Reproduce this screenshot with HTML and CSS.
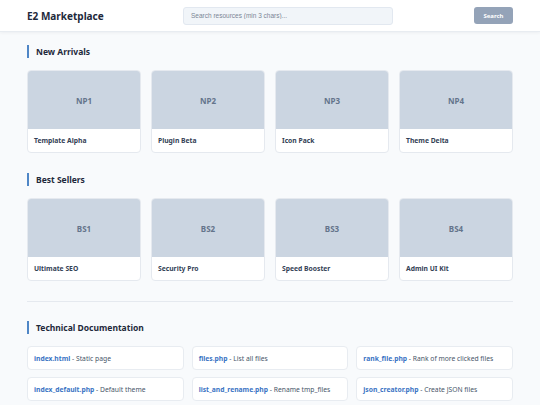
FILE: index.html
```html
<!DOCTYPE html>
<html lang="en">
<head>
<meta charset="utf-8">
<title>E2 Marketplace</title>
<link rel="stylesheet" href="styles.css">
</head>
<body>
<header class="topbar">
  <div class="brand">E2 Marketplace</div>
  <input class="search" type="text" placeholder="Search resources (min 3 chars)...">
  <button class="search-btn">Search</button>
</header>
<main class="content">
  <section class="section">
    <h2 class="section-title">New Arrivals</h2>
    <div class="cards">
      <div class="card"><div class="thumb">NP1</div><div class="card-body">Template Alpha</div></div>
      <div class="card"><div class="thumb">NP2</div><div class="card-body">Plugin Beta</div></div>
      <div class="card"><div class="thumb">NP3</div><div class="card-body">Icon Pack</div></div>
      <div class="card"><div class="thumb">NP4</div><div class="card-body">Theme Delta</div></div>
    </div>
  </section>
  <section class="section">
    <h2 class="section-title">Best Sellers</h2>
    <div class="cards">
      <div class="card"><div class="thumb">BS1</div><div class="card-body">Ultimate SEO</div></div>
      <div class="card"><div class="thumb">BS2</div><div class="card-body">Security Pro</div></div>
      <div class="card"><div class="thumb">BS3</div><div class="card-body">Speed Booster</div></div>
      <div class="card"><div class="thumb">BS4</div><div class="card-body">Admin UI Kit</div></div>
    </div>
  </section>
  <hr class="divider">
  <section class="section">
    <h2 class="section-title">Technical Documentation</h2>
    <div class="docs">
      <div class="doc"><a class="doc-link">index.html</a> - Static page</div>
      <div class="doc"><a class="doc-link">files.php</a> - List all files</div>
      <div class="doc"><a class="doc-link">rank_file.php</a> - Rank of more clicked files</div>
      <div class="doc"><a class="doc-link">index_default.php</a> - Default theme</div>
      <div class="doc"><a class="doc-link">list_and_rename.php</a> - Rename tmp_files</div>
      <div class="doc"><a class="doc-link">json_creator.php</a> - Create JSON files</div>
    </div>
  </section>
</main>
</body>
</html>
```

FILE: styles.css
```css
* { box-sizing: border-box; }
html, body { margin: 0; padding: 0; }
body {
  background: #f8fafc;
  font-family: "Noto Sans", "Open Sans", sans-serif;
  color: #1e293b;
  overflow: hidden;
}
.topbar {
  height: 32px;
  background: #ffffff;
  border-bottom: 1px solid #e8ecf1;
  box-shadow: 0 1px 3px rgba(15, 23, 42, 0.05);
  display: flex;
  align-items: center;
  padding: 0 27px;
}
.brand {
  font-weight: 700;
  font-size: 10px;
  color: #1e293b;
  width: 156px;
}
.search {
  width: 210px;
  height: 18px;
  border: 1px solid #e2e8f0;
  background: #f1f5f9;
  border-radius: 3px;
  padding: 0 7px;
  font-family: "Liberation Sans", sans-serif;
  font-size: 6.5px;
  color: #334155;
  outline: none;
}
.search::placeholder { color: #7b8595; }
.search-btn {
  margin-left: auto;
  width: 39px;
  height: 17px;
  background: #94a3b8;
  border: none;
  border-radius: 3px;
  color: #ffffff;
  font-family: "Noto Sans", sans-serif;
  font-size: 6px;
  font-weight: 700;
  padding: 0;
}
.content {
  padding: 13px 27px 0;
}
.section { margin-bottom: 20px; }
.section-title {
  margin: 0 0 12px;
  border-left: 2px solid #4f86c6;
  padding-left: 7px;
  height: 13px;
  line-height: 13px;
  font-size: 8.5px;
  font-weight: 700;
  color: #1e293b;
}
.cards {
  display: grid;
  grid-template-columns: repeat(4, 1fr);
  gap: 10px;
}
.card {
  background: #ffffff;
  border: 1px solid #e5e9ef;
  border-radius: 4px;
  overflow: hidden;
}
.thumb {
  height: 58px;
  background: #cbd5e1;
  display: flex;
  align-items: center;
  justify-content: center;
  font-size: 8px;
  font-weight: 700;
  color: #64748b;
}
.card-body {
  height: 23px;
  display: flex;
  align-items: center;
  padding: 0 6px;
  font-size: 6.75px;
  font-weight: 700;
  color: #334155;
}
.divider {
  border: none;
  border-top: 1px solid #e5e9ef;
  margin: 0 0 19px;
}
.docs {
  display: grid;
  grid-template-columns: repeat(3, 1fr);
  gap: 7px 8px;
}
.doc {
  height: 24px;
  background: #ffffff;
  border: 1px solid #e8ecf1;
  border-radius: 4px;
  display: flex;
  align-items: center;
  padding: 0 6px;
  font-size: 6.75px;
  color: #475569;
  white-space: pre;
}
.doc-link {
  color: #3b74c4;
  font-weight: 700;
}
```
